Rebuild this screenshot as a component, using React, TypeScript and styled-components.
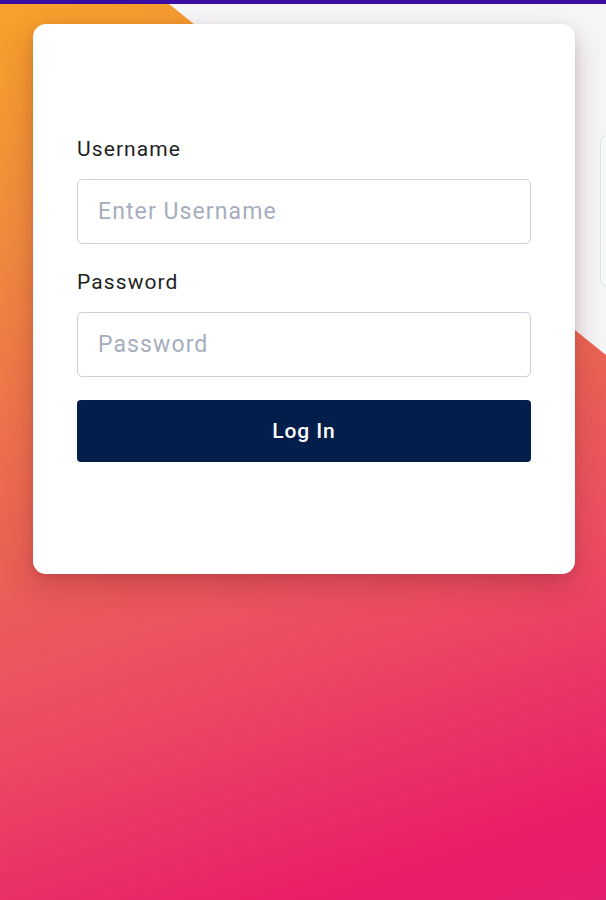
import React from "react";
import styled, { createGlobalStyle } from "styled-components";

const Global = createGlobalStyle`
  html, body { margin: 0; padding: 0; }
  body { font-family: Roboto, "Noto Sans", Arial, sans-serif; overflow: hidden; }
  * { box-sizing: border-box; }
`;

const TopBar = styled.div`
  height: 4px;
  background: #3a0ca3;
`;

const Stage = styled.main`
  position: relative;
  height: 896px;
  overflow: hidden;
  background: linear-gradient(162deg, #f8a12a 0%, #f08a3e 22%, #ea6553 48%, #ec4b63 68%, #e91c68 92%, #e51f70 100%);
  display: flex;
  align-items: flex-start;
  gap: 25px;
  padding: 20px 0 0 33px;

  &::before {
    content: "";
    position: absolute;
    inset: 0;
    background: linear-gradient(180deg, #f5f6f8 0%, #f3f4f6 100%);
    clip-path: polygon(169px 0, 100% 0, 100% 351px);
  }
`;

const Card = styled.section`
  position: relative;
  flex: 0 0 542px;
  background: #ffffff;
  border-radius: 13px;
  padding: 113px 44px 112px;
  box-shadow: 0 12px 28px rgba(120, 30, 40, 0.28), 0 2px 8px rgba(0, 0, 0, 0.08);
  display: flex;
  flex-direction: column;
`;

const SidePanel = styled.aside`
  position: relative;
  flex: 0 0 300px;
  height: 152px;
  margin-top: 111px;
  border: 1.5px solid #dfe2e6;
  border-radius: 8px;
  background: #f7f8f9;
`;

const Label = styled.label<{ $gap: number }>`
  font-size: 21px;
  line-height: 25px;
  letter-spacing: 1.1px;
  color: #1f1f1f;
  margin-top: ${(p) => p.$gap}px;
  margin-bottom: 17px;
`;

const Input = styled.input`
  height: 65px;
  width: 100%;
  border: 1.5px solid #cdd1d7;
  border-radius: 5px;
  padding: 0 20px;
  font-family: Roboto, "Noto Sans", Arial, sans-serif;
  font-size: 23px;
  letter-spacing: 1.1px;
  color: #222;
  background: #fff;
  outline: none;
  &::placeholder { color: #a6adbd; }
`;

const Button = styled.button`
  margin-top: 23px;
  height: 62px;
  width: 100%;
  border: none;
  border-radius: 4px;
  background: #031e4a;
  color: #ffffff;
  font-family: Roboto, "Noto Sans", Arial, sans-serif;
  font-size: 21px;
  font-weight: 500;
  letter-spacing: 0.9px;
  cursor: pointer;
`;

export default function App() {
  return (
    <>
      <Global />
      <TopBar />
      <Stage>
        <Card>
          <Label $gap={0} htmlFor="username">Username</Label>
          <Input id="username" placeholder="Enter Username" />
          <Label $gap={26} htmlFor="password">Password</Label>
          <Input id="password" type="password" placeholder="Password" />
          <Button>Log In</Button>
        </Card>
        <SidePanel />
      </Stage>
    </>
  );
}
